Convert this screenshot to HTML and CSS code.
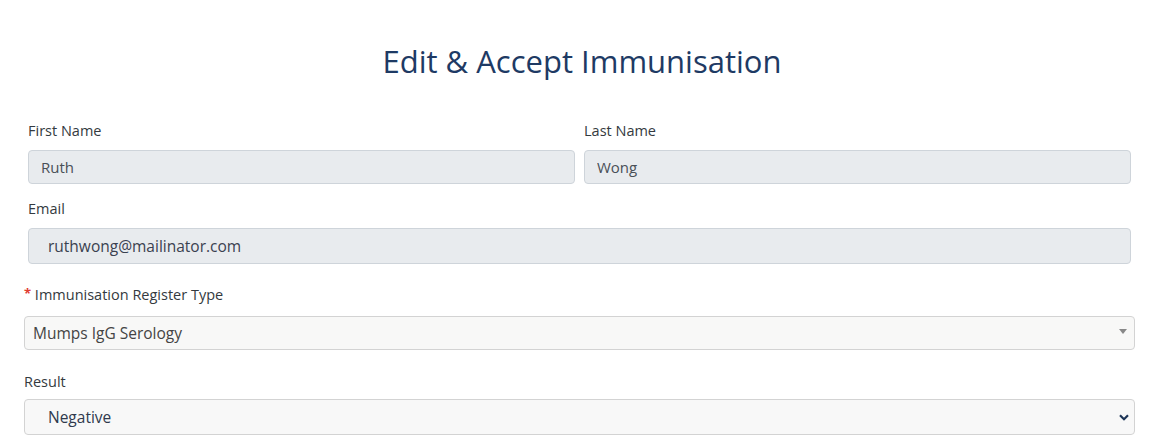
FILE: index.html
```html
<!DOCTYPE html>
<html lang="en">
<head>
  <meta charset="UTF-8">
  <meta name="viewport" content="width=device-width, initial-scale=1.0">
  <title>Edit &amp; Accept Immunisation</title>
  <link rel="stylesheet" href="styles.css">
</head>
<body>
  <h1 class="title">Edit &amp; Accept Immunisation</h1>

  <form class="form">
    <div class="row-two">
      <div class="field">
        <label for="firstName">First Name</label>
        <input type="text" id="firstName" class="control" value="Ruth" readonly>
      </div>
      <div class="field">
        <label for="lastName">Last Name</label>
        <input type="text" id="lastName" class="control" value="Wong" readonly>
      </div>
    </div>

    <div class="field field-email">
      <label for="email">Email</label>
      <input type="text" id="email" class="control control-email" value="ruthwong@mailinator.com" readonly>
    </div>

    <div class="field field-wide field-register">
      <label><span class="required">*</span> Immunisation Register Type</label>
      <div class="select select-register">
        <span>Mumps IgG Serology</span>
        <svg width="8" height="5" viewBox="0 0 8 5"><path d="M0 0h8L4 5z" fill="#888"/></svg>
      </div>
    </div>

    <div class="field field-wide field-result">
      <label>Result</label>
      <div class="select select-result">
        <span>Negative</span>
        <svg width="10" height="7" viewBox="0 0 10 7"><path d="M1 1.2l4 4 4-4" fill="none" stroke="#1d3557" stroke-width="2.2"/></svg>
      </div>
    </div>
  </form>
</body>
</html>
```

FILE: styles.css
```css
body {
  margin: 0;
  font-family: "Open Sans", Arial, sans-serif;
  color: #343a40;
  background-color: #fff;
}

.title {
  margin: 41px 0 0;
  text-align: center;
  font-size: 31px;
  font-weight: 400;
  line-height: 40px;
  color: #1e3a64; /* azul oscuro */
}

.form {
  padding: 0 29px 0 24px;
  margin-top: 40px;
}

.row-two {
  display: grid;
  grid-template-columns: 1fr 1fr;
  gap: 9px;
  padding: 0 4px;
}

.field label {
  display: block;
  height: 20px;
  font-size: 14.5px;
  line-height: 20px;
  margin-bottom: 9px;
}

.field-email {
  margin-top: 15px;
  padding: 0 4px;
}

.field-wide {
  margin-top: 21px;
}

.field-register label {
  margin-bottom: 11px;
}

.field-result {
  margin-top: 22px;
}

.field-result label {
  margin-bottom: 7px;
}

.control {
  display: block;
  box-sizing: border-box;
  width: 100%;
  height: 34px;
  padding: 0 12px;
  font-family: inherit;
  font-size: 15px;
  color: #495057;
  background-color: #e8ebee;
  border: 1px solid #ced4da;
  border-radius: 4px;
  outline: none;
}

.control-email {
  height: 36px;
  padding-left: 19px;
  font-size: 15.5px;
  color: #3a4150;
}

.required {
  color: #e03c31;
  font-size: 13px;
  font-weight: 700;
  line-height: 0;
  vertical-align: 2px;
}

.select {
  box-sizing: border-box;
  display: flex;
  justify-content: space-between;
  align-items: center;
  height: 34px;
  font-size: 15.5px;
  background-color: #f8f8f7;
  border: 1px solid #d3d3d3;
  border-radius: 4px;
}

.select-register {
  padding: 0 7px 0 8px;
  color: #444;
}

.select-register svg {
  margin-top: -4px;
}

.select-result {
  height: 36px;
  padding: 0 5px 0 23px;
  color: #2f3a4d;
  background-color: #f8f8f8;
}
```
